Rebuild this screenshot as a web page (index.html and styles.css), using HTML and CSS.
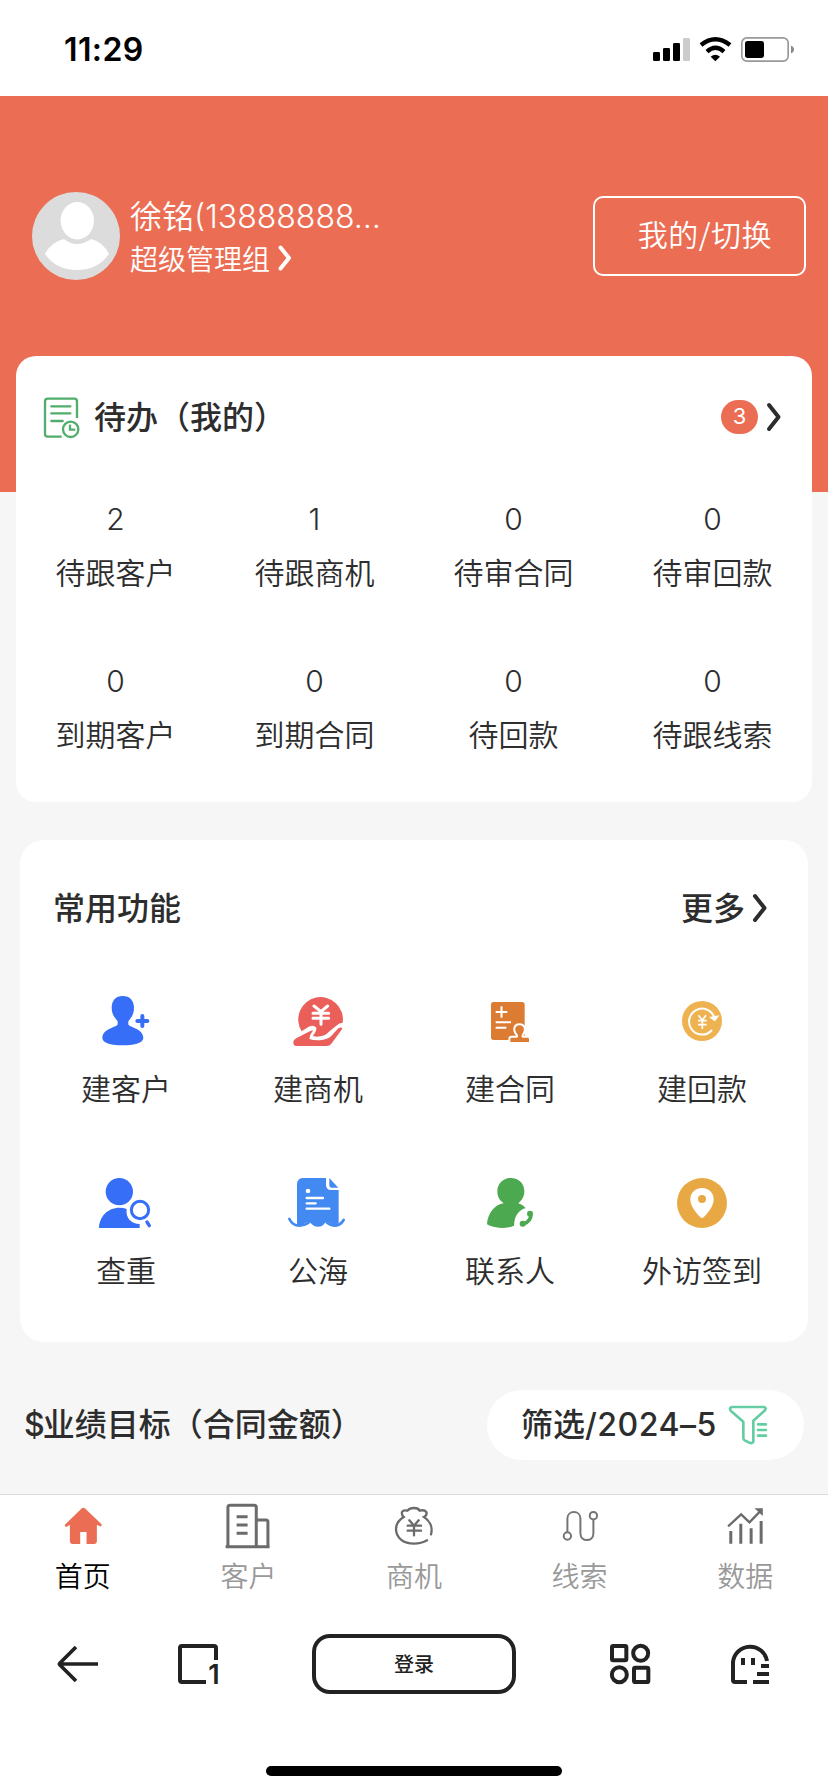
FILE: index.html
```html
<!DOCTYPE html>
<html lang="zh-CN">
<head>
<meta charset="utf-8">
<title>首页</title>
<link rel="stylesheet" href="styles.css">
</head>
<body>
<div class="screen">
  <div class="status">
    <span class="clock">11:29</span>
    <svg class="status-icons" viewBox="714 108 429 81">
      <rect x="717" y="156" width="21" height="27" rx="4"/>
      <rect x="747" y="144" width="21" height="39" rx="4"/>
      <rect x="777" y="129" width="21" height="54" rx="4"/>
      <rect x="807" y="114" width="21" height="69" rx="4" fill="#ccc"/>
      <path d="M861 135Q904 100 948 135M879 155Q904 132 930 155" fill="none" stroke="#000" stroke-width="13"/>
      <path d="M890 170Q904 159 918 170L904 184Z"/>
      <rect x="983.500" y="113.500" width="139" height="70" rx="15" fill="none" stroke="#999" stroke-width="5"/>
      <rect x="993" y="123" width="57" height="51" rx="8"/>
      <path d="M1131 137Q1140 140 1140 148.500T1131 160Z" fill="#888"/>
    </svg>
  </div>

  <header class="hero">
    <svg class="avatar" viewBox="0 0 88 88">
      <circle cx="44" cy="44" r="44" fill="#dcdcdc"/>
      <ellipse cx="45.300" cy="28.700" rx="16.700" ry="18.700" fill="#fff"/>
      <path d="M13 62Q19 50 32 47Q38 52 45 52T59 47Q71 50 77 62Q66 78 45 78T13 62Z" fill="#fff"/>
    </svg>
    <div class="who">
      <div class="name">徐铭<span class="digits">(13888888…</span></div>
      <div class="group">超级管理组
        <svg class="chev-s" viewBox="0 0 14 26"><path d="M2.500 2.500L11 13L2.500 23.500"/></svg>
      </div>
    </div>
    <div class="switch">我的/切换</div>
  </header>

  <section class="card todo">
    <div class="todo-head">
      <svg class="todo-icon" viewBox="132 168 108 123">
        <g fill="none" stroke="#50ad6c" stroke-width="7" stroke-linecap="round">
          <path d="M231 231V181Q231 173 223 173H143Q135 173 135 181V279Q135 287 143 287H185" stroke-linecap="butt"/>
          <path d="M154 196H211M154 217H211M154 240H188"/>
          <circle cx="212" cy="265" r="23"/>
          <path d="M210 254V266H223"/>
        </g>
      </svg>
      <h2 class="title">待办（我的）</h2>
      <span class="badge">3</span>
      <svg class="chev" viewBox="0 0 14 28"><path d="M2 2L11.500 14L2 26"/></svg>
    </div>
    <div class="stats">
      <div class="stat"><b>2</b><span>待跟客户</span></div>
      <div class="stat"><b>1</b><span>待跟商机</span></div>
      <div class="stat"><b>0</b><span>待审合同</span></div>
      <div class="stat"><b>0</b><span>待审回款</span></div>
      <div class="stat"><b>0</b><span>到期客户</span></div>
      <div class="stat"><b>0</b><span>到期合同</span></div>
      <div class="stat"><b>0</b><span>待回款</span></div>
      <div class="stat"><b>0</b><span>待跟线索</span></div>
    </div>
  </section>

  <section class="card common">
    <div class="common-head">
      <h2 class="title">常用功能</h2>
      <span class="title more">更多</span>
      <svg class="chev" viewBox="0 0 14 28"><path d="M2 2L11.500 14L2 26"/></svg>
    </div>
    <div class="apps">
      <div class="app">
        <svg viewBox="288 93 180 180" fill="#376ef8">
          <path d="M368 108C390 108 402 122 402 143C402 163 393 174 385 184V192C385 203 429 203 430 234C430 250 398 256 368 256S307 250 307 234C308 203 353 203 353 192V184C345 174 335 163 335 143C335 122 347 108 368 108Z"/>
          <path d="M427 168V198M412 183H442" stroke="#376ef8" stroke-width="12" stroke-linecap="round"/>
        </svg>
        <span>建客户</span>
      </div>
      <div class="app">
        <svg viewBox="864 93 180 180" fill="#ea5f5a">
          <path d="M905 214A67 67 0 1 1 1028 188Q1018 188 1008 198L985 217Q974 230 950 230L938 228Q950 215 949 203Q941 193 925 201Z"/>
          <path d="M880 247Q880 239 890 234L925 216Q941 208 938 213Q928 226 928 237Q945 243 965 240Q982 239 993 229L1015 205Q1024 199 1027 206L994 251Q989 258 980 258H887Q880 257 880 247Z"/>
          <path d="M942 138L963 155L983 138M963 155V193M939 160H986M939 175H986" fill="none" stroke="#fff" stroke-width="9" stroke-linecap="round"/>
        </svg>
        <span>建商机</span>
      </div>
      <div class="app">
        <svg viewBox="198 93 180 180">
          <rect x="231" y="126" width="101" height="114" rx="8" fill="#dc7b32"/>
          <path d="M245 156H280M262.500 139V173M245 187H291M245 203H277" stroke="#fff" stroke-width="6"/>
          <path d="M316 196C333 196 332 214 325 221Q320 229 325 233H341Q345 233 345 237V246H289V237Q289 233 293 233H309Q315 229 310 222C301 213 301 196 316 196Z" fill="#dc7b32" stroke="#fff" stroke-width="12" paint-order="stroke"/>
        </svg>
        <span>建合同</span>
      </div>
      <div class="app">
        <svg viewBox="774 93 180 180">
          <circle cx="864" cy="183" r="60" fill="#efb251"/>
          <path d="M894 210A39 39 0 1 1 901 172" fill="none" stroke="#fff" stroke-width="6"/>
          <path d="M887 172L914 167L903 183Z" fill="#fff" stroke="#fff" stroke-width="2" stroke-linejoin="round"/>
          <path d="M853 166L865 180L876 166M865 180V207M852 182H878M852 194H878" fill="none" stroke="#fff" stroke-width="5"/>
        </svg>
        <span>建回款</span>
      </div>
      <div class="app">
        <svg viewBox="288 639 180 180">
          <circle cx="358" cy="695" r="41" fill="#376ef8"/>
          <path d="M297 804C298 770 323 743 358 743Q370 743 380 747Q377 767 389 780Q401 792 419 792V804Z" fill="#376ef8"/>
          <circle cx="420" cy="750" r="26" fill="none" stroke="#376ef8" stroke-width="9"/>
          <path d="M441 786L448 797" stroke="#376ef8" stroke-width="10" stroke-linecap="round"/>
        </svg>
        <span>查重</span>
      </div>
      <div class="app">
        <svg viewBox="864 639 180 180">
          <path d="M908 654H978V676Q979 690 993 690H1016V790C995 803 994 787 982 787C970 787 974 800 954 800C935 800 936 787 924 787C914 787 912 797 891 797V671Q892 656 908 654Z" fill="#4289f2"/>
          <path d="M988 654L1015 683H994Q988 683 988 676Z" fill="#4289f2"/>
          <path d="M868 777Q878 797 898 797Q913 797 925 789M982 789Q993 797 1002 797Q1021 797 1031 780" fill="none" stroke="#4289f2" stroke-width="8" stroke-linecap="round"/>
          <circle cx="924" cy="693" r="7" fill="#fff"/>
          <path d="M920 714H969M920 730H947M920 746H988" stroke="#fff" stroke-width="7" stroke-linecap="round"/>
        </svg>
        <span>公海</span>
      </div>
      <div class="app">
        <svg viewBox="198 639 180 180">
          <path d="M290 654C315 654 331 671 331 694C331 710 324 721 313 730Q326 734 335 744Q301 755 300 797Q286 804 262 804Q236 803 219 793C221 761 241 734 269 730C257 721 250 711 250 694C250 671 267 654 290 654Z" fill="#4da950"/>
          <path d="M351 761Q352 785 325 794" fill="none" stroke="#4da950" stroke-width="11"/>
          <circle cx="348" cy="761" r="9" fill="#4da950"/><circle cx="326" cy="791" r="9" fill="#4da950"/>
        </svg>
        <span>联系人</span>
      </div>
      <div class="app">
        <svg viewBox="774 639 180 180">
          <circle cx="864" cy="729" r="75" fill="#e8a945"/>
          <path d="M864 684C886 684 899 700 899 718C899 737 884 757 869 772Q864 776 859 772C844 757 829 737 829 718C829 700 842 684 864 684Z" fill="#fff"/>
          <circle cx="864" cy="717" r="12" fill="#e8a945"/>
        </svg>
        <span>外访签到</span>
      </div>
    </div>
  </section>

  <div class="goal">
    <h2 class="title"><span class="latin sign">$</span>业绩目标（合同金额）</h2>
    <div class="filter">
      <span class="title">筛选<span class="latin period">/2024–5</span></span>
      <svg class="funnel" viewBox="942 256 120 120">
        <g fill="none" stroke="#65cda3" stroke-width="8" stroke-linecap="round" stroke-linejoin="round">
          <path d="M954 262H1050Q1058 264 1053 272L1018 303V366Q1014 373 1006 369L992 362Q988 360 988 354V306L950 273Q945 264 954 262Z"/>
          <path d="M1032 314H1056M1032 331H1056M1032 348H1056"/>
        </g>
      </svg>
    </div>
  </div>

  <nav class="tabs">
    <div class="tab on">
      <svg viewBox="167.400 537 162 162">
        <path d="M245 565Q249 562 254 565L304 613Q306 620 299 619L290 614V663Q290 672 281 672H259V636H240V672H218Q209 672 209 663V614L200 620Q193 622 194 614Z" fill="#eb6e54"/>
      </svg>
      <span>首页</span>
    </div>
    <div class="tab">
      <svg viewBox="664.200 537 162 162" fill="none" stroke="#6b6b6b" stroke-width="9">
        <path d="M685 680V562Q685 556 691 556H764Q770 556 770 562V680M770 600H799Q805 600 805 606V680M678 680H810M711 590H744M711 615H744M711 640H744"/>
      </svg>
      <span>客户</span>
    </div>
    <div class="tab">
      <svg viewBox="-81 537 162 162" fill="none" stroke="#6b6b6b" stroke-width="7" stroke-linecap="round">
        <path d="M39 661Q22 671 0 671C-32 671 -54 653 -54 627C-54 611 -45 600 -31 591Q-38 585 -36 576Q-32 569 -20 572Q-13 564 0 564T17 572Q31 568 37 576Q40 586 30 591C47 602 57 621 51 643"/>
        <path d="M-14 601L0 617L14 601M0 617V646M-19 617H21M-19 632H21"/>
      </svg>
      <span>商机</span>
    </div>
    <div class="tab">
      <svg viewBox="415.800 537 162 162" fill="none" stroke="#757575" stroke-width="6">
        <path d="M459 637V595C459 570 498 570 498 595V640C498 667 537 667 537 640V600"/>
        <circle cx="459" cy="648" r="11"/><circle cx="537" cy="587" r="11"/>
      </svg>
      <span>线索</span>
    </div>
    <div class="tab">
      <svg viewBox="912.600 537 162 162" fill="none" stroke="#6b6b6b" stroke-width="9">
        <path d="M951 633V671M981 611V671M1012 625V671M1042 603V671"/>
        <path d="M943 619L982 583L1007 607L1041 572" stroke-width="7"/>
        <path d="M1022 565H1047V588Z" fill="#6b6b6b" stroke="none"/>
      </svg>
      <span>数据</span>
    </div>
  </nav>

  <div class="browser">
    <div class="pair">
      <svg viewBox="174 132 120 120" fill="none" stroke="#222" stroke-width="12">
        <path d="M294 192H182M228 141L180 189Q177 192 180 195L228 243" stroke-width="11"/>
      </svg>
      <svg viewBox="534 132 120 120" fill="none" stroke="#222" stroke-width="12">
        <path d="M648 180V144Q648 138 642 138H546Q540 138 540 144V240Q540 246 546 246H618"/>
        <text x="659" y="252" text-anchor="end" class="count">1</text>
      </svg>
    </div>
    <div class="login">登录</div>
    <div class="pair">
      <svg viewBox="588 132 120 120" fill="none" stroke="#222" stroke-width="12">
        <rect x="594" y="138" width="43" height="43" rx="4"/><circle cx="680" cy="160" r="22.500"/>
        <circle cx="616" cy="224" r="22.500"/><rect x="660" y="203" width="43" height="43" rx="4"/>
      </svg>
      <svg viewBox="948 132 120 120" fill="none" stroke="#222" stroke-width="12">
        <path d="M999 246H963Q957 246 957 240V186A51.500 51.500 0 0 1 1059 183M1017 246H1065M1029 222H1065M1041 198H1065M987 174V195M1017 174V195"/>
      </svg>
    </div>
  </div>
  <div class="home-bar"></div>
</div>
</body>
</html>
```

FILE: styles.css
```css
* { box-sizing: border-box; }
body {
  margin: 0;
  background: #fff;
  color: #2d2d2d;
  font-family: "Noto Sans CJK SC", sans-serif;
}
svg { display: block; flex: none; overflow: visible; }
.screen {
  width: 828px;
  height: 1792px;
  display: flex;
  flex-direction: column;
  overflow: hidden;
  background: #f6f6f6;
}
.screen > * { flex: none; }

.status {
  height: 96px;
  padding: 0 33px 0 64px;
  display: flex;
  justify-content: space-between;
  align-items: center;
  background: #fff;
  color: #000;
}
.clock {
  font: 600 32px/40px Inter, sans-serif;
  letter-spacing: 0.4px;
  padding-top: 4px;
}
.status-icons { width: 143px; height: 27px; margin-top: 3px; }

.hero {
  height: 396px;
  padding: 96px 22px 0 32px;
  display: flex;
  align-items: flex-start;
  background: #eb6e54;
  color: #fff;
  font-weight: 350;
}
.avatar { width: 88px; height: 88px; }
.who { flex: 1; padding: 0 0 0 10px; }
.name { height: 44px; font-size: 32px; line-height: 44px; white-space: nowrap; }
.digits { font-family: Inter, sans-serif; font-weight: 300; }
.group {
  display: flex;
  align-items: center;
  gap: 8px;
  font-size: 28px;
  line-height: 44px;
}
.chev-s { width: 14px; height: 26px; }
.chev { width: 14px; height: 28px; }
.chev path, .chev-s path {
  fill: none;
  stroke: #2d2d2d;
  stroke-width: 4;
  stroke-linecap: round;
  stroke-linejoin: round;
}
.chev-s path { stroke: #fff; }
.switch {
  width: 213px;
  height: 80px;
  margin-top: 4px;
  padding-left: 11px;
  border: 2px solid #fff;
  border-radius: 10px;
  font-size: 30px;
  line-height: 71px;
  letter-spacing: 0.5px;
  text-align: center;
}

.card { background: #fff; }
.title {
  margin: 0;
  padding-bottom: 4px;
  font-size: 32px;
  font-weight: 500;
  line-height: 44px;
  white-space: nowrap;
}
.todo {
  height: 446px;
  margin: -136px 16px 0;
  border-radius: 20px;
}
.todo-head {
  height: 122px;
  padding: 0 31px 0 28px;
  display: flex;
  align-items: center;
}
.todo-icon { width: 36px; height: 41px; margin-right: 14px; }
.badge {
  width: 37px;
  height: 34px;
  margin: 0 9px 0 auto;
  border-radius: 17px;
  background: #eb6e54;
  color: #fff;
  font: 400 22px/33px Inter, sans-serif;
  text-align: center;
}
.stats {
  padding-top: 14px;
  display: grid;
  grid-template-columns: repeat(4, 1fr);
  row-gap: 54px;
}
.stat, .app { display: flex; flex-direction: column; align-items: center; }
.stat b { font: 300 30px/54px Inter, sans-serif; }
.stat span, .app span {
  padding-bottom: 4px;
  font-size: 30px;
  line-height: 50px;
  font-weight: 350;
}

.common {
  height: 502px;
  margin: 38px 20px 0;
  padding: 0 10px;
  border-radius: 24px;
}
.common-head {
  height: 136px;
  padding: 0 31px 0 23px;
  display: flex;
  align-items: center;
}
.more { margin: 0 8px 0 auto; }
.apps {
  padding-top: 15px;
  display: grid;
  grid-template-columns: repeat(4, 1fr);
  row-gap: 57px;
}
.app svg { width: 60px; height: 60px; margin-bottom: 11px; }

.goal {
  height: 70px;
  margin: 48px 24px 34px;
  display: flex;
  justify-content: space-between;
  align-items: center;
}
.filter {
  width: 317px;
  height: 70px;
  padding: 0 36px 0 34px;
  display: flex;
  justify-content: space-between;
  align-items: center;
  border-radius: 35px;
  background: #fff;
}
.latin { font-family: Inter, sans-serif; }
.sign { letter-spacing: -2px; }
.period { letter-spacing: 0.5px; }
.funnel { width: 40px; height: 40px; }

.tabs {
  height: 114px;
  padding-top: 4px;
  border-top: 1px solid #dcdcdc;
  display: grid;
  grid-template-columns: repeat(5, 1fr);
  background: #fff;
  color: #999;
}
.tab { display: flex; flex-direction: column; align-items: center; }
.tab svg { width: 54px; height: 54px; }
.tab span { font-size: 28px; line-height: 40px; font-weight: 350; margin-top: 2px; }
.on { color: #000; }

.browser {
  height: 112px;
  padding: 0 58px;
  display: flex;
  justify-content: space-between;
  align-items: center;
  background: #fff;
}
.pair { display: flex; gap: 80px; }
.pair svg { width: 40px; height: 40px; }
.count { font: 600 81px Inter, sans-serif; fill: #222; stroke: none; }
.login {
  width: 204px;
  height: 60px;
  border: 4px solid #222;
  border-radius: 18px;
  color: #222;
  font-size: 20px;
  font-weight: 500;
  line-height: 51px;
  text-align: center;
}
.home-bar {
  flex: 1 0 auto;
  background: #fff;
  padding-top: 46px;
}
.home-bar::before {
  content: "";
  display: block;
  width: 296px;
  height: 10px;
  margin: 0 auto;
  border-radius: 5px;
  background: #000;
}
```
